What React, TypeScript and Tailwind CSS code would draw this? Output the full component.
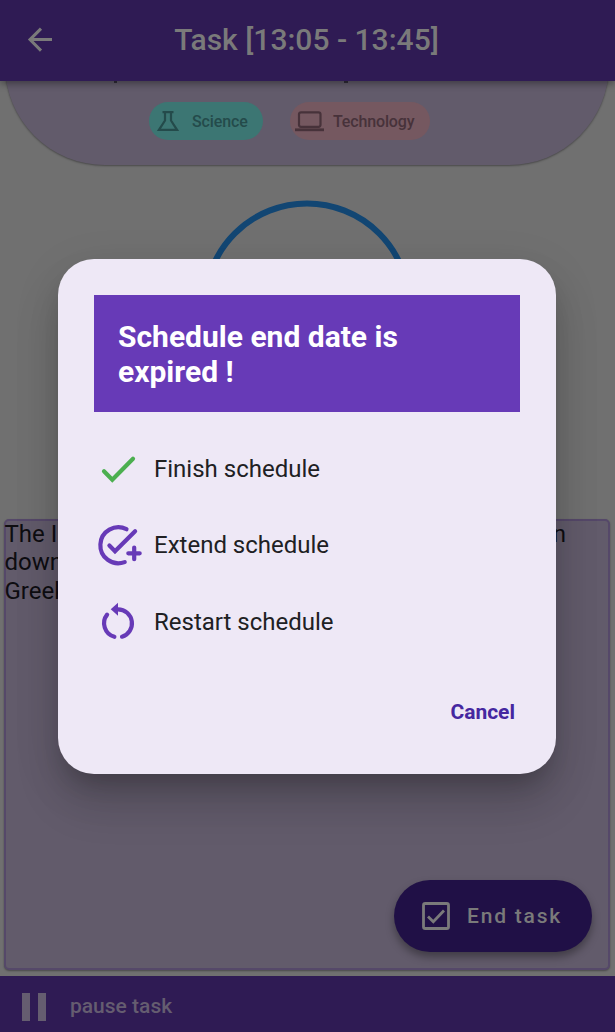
import React from "react";

function CheckIcon() {
  return (
    <svg className="h-12 w-12 shrink-0" viewBox="0 0 48 48" fill="none" stroke="#4caf50" strokeWidth="4.2" strokeLinecap="round" strokeLinejoin="miter">
      <path d="M10 26.3 18.3 34.7 39 13.8" />
    </svg>
  );
}

function ExtendIcon() {
  return (
    <svg className="h-12 w-12 shrink-0" viewBox="0 0 48 48" fill="none" stroke="#673ab7" strokeWidth="4.2" strokeLinecap="round">
      <path d="M32.5 8.2A18 18 0 1 0 30.7 41.1" />
      <path d="M15.4 24.6 21 30.2 41.1 10.2" strokeLinejoin="miter" />
      <path d="M34.3 32.3H45.7M40.2 26.6V38.2" />
    </svg>
  );
}

function RestartIcon() {
  return (
    <svg className="h-12 w-12 shrink-0" viewBox="0 0 48 48" fill="none" stroke="#673ab7" strokeWidth="4.2" strokeLinecap="round">
      <path d="M24 11.3A14 14 0 0 1 28 38.7" />
      <path d="M13.1 16.6A14 14 0 0 0 20.4 38.8" />
      <path d="M16.7 11.2 24 4.7V17.8Z" fill="#673ab7" stroke="none" />
    </svg>
  );
}

function Header() {
  return (
    <header className="relative z-10 flex h-[81px] items-center bg-[#2f1b54] px-6 pb-[2px] text-[#7a7a7a] shadow-[0_3px_7px_rgba(0,0,0,0.35)]">
      <svg className="h-8 w-8 shrink-0" viewBox="0 0 32 32" fill="none" stroke="currentColor" strokeWidth="3">
        <path d="M28 15.6H7M17 4.6 6 15.6 17 26.6" />
      </svg>
      <h1 className="flex-1 pr-[34px] text-center text-[30px] leading-[36px] font-medium">Task [13:05 - 13:45]</h1>
    </header>
  );
}

function Tags() {
  return (
    <section className="mx-[5px] -mt-10 h-[124px] w-[604px] rounded-b-[100px] bg-[#625b6b] pt-10 shadow-[0_1px_2px_rgba(0,0,0,0.35)]">
      <div className="flex h-[21px] items-start pl-[109px]">
        <span className="h-[1.5px] w-[3px] bg-[#302c38]" />
        <span className="ml-[227px] h-[1.5px] w-[4px] bg-[#302c38]" />
      </div>
      <div className="flex gap-[27px] pl-[144px] text-[16px] font-medium">
        <div className="flex h-[38px] w-[114px] items-center rounded-full bg-[#3c7673] pl-2 text-[#244b4b]">
          <svg className="mr-[13px] h-6 w-[22px]" viewBox="0 0 22 24" fill="none" stroke="currentColor" strokeWidth="2.2">
            <path d="M5.5 3.2H16.5M8 3V11.5L2 20.8H20L14 11.5V3" />
          </svg>
          <span className="pt-[2px] tracking-[-0.1px]">Science</span>
        </div>
        <div className="flex h-[38px] w-[140px] items-center rounded-full bg-[#755860] pl-[5px] text-[#47323a]">
          <svg className="mr-[9px] h-6 w-[29px]" viewBox="0 0 29 24" fill="none" stroke="currentColor" strokeWidth="2.2">
            <rect x="4" y="3.3" width="21.5" height="14.5" rx="2" />
            <path d="M0 20.8H29" strokeWidth="2.8" />
          </svg>
          <span className="pt-[2px] tracking-[-0.15px]">Technology</span>
        </div>
      </div>
    </section>
  );
}

function Notes() {
  return (
    <section className="mx-1 h-[451px] w-[606px] rounded-[5px] border-2 border-[#554869] bg-[#625b6b] text-[24px] leading-[28.3px] text-[#0e0d11] shadow-[0_1px_2px_rgba(0,0,0,0.35)]">
      <div className="-mt-px -ml-[1.5px] flex justify-between pr-[42px]">
        <span>The I</span>
        <span>n</span>
      </div>
      <div className="-ml-[1.5px]">down</div>
      <div className="-ml-[1.5px]">Greek</div>
    </section>
  );
}

function Option({ icon, label }: { icon: React.ReactNode; label: string }) {
  return (
    <button className="flex h-12 items-center gap-3 text-left text-[24px] leading-[30px] text-[#202023]">
      {icon}
      <span>{label}</span>
    </button>
  );
}

function ExpiredDialog() {
  return (
    <div className="absolute inset-0 z-30 flex items-start justify-center pt-[259px] pr-px">
      <div role="dialog" className="flex h-[515px] w-[498px] flex-col rounded-[36px] bg-[#eee8f6] px-9 pt-9 shadow-[0_16px_23px_-10px_rgba(0,0,0,0.2),0_30px_45px_0px_rgba(0,0,0,0.14),0_12px_48px_3px_rgba(0,0,0,0.08)]">
        <h2 className="h-[117px] bg-[#673ab7] px-6 pt-6 text-[30px] leading-[35px] font-bold text-white">
          Schedule end date is
          <br />
          expired !
        </h2>
        <div className="mt-[33px] flex flex-col">
          <Option icon={<CheckIcon />} label="Finish schedule" />
          <div className="h-7" />
          <Option icon={<ExtendIcon />} label="Extend schedule" />
          <div className="h-[29px]" />
          <Option icon={<RestartIcon />} label="Restart schedule" />
        </div>
        <button className="mt-[54px] mr-[5px] self-end text-[21px] leading-[24px] font-bold text-[#4527a0]">Cancel</button>
      </div>
    </div>
  );
}

export default function App() {
  return (
    <div className="relative flex h-[1032px] w-[615px] flex-col overflow-hidden bg-[#707070] font-['Roboto',sans-serif]">
      <Header />
      <Tags />
      <div className="flex h-[354px] justify-center pt-[34px] pr-px">
        <svg className="h-[214px] w-[214px]" viewBox="0 0 214 214" fill="none">
          <circle cx="107" cy="106.5" r="102" stroke="#124673" strokeWidth="6" />
        </svg>
      </div>
      <Notes />
      <footer className="mt-auto flex h-[56px] items-center bg-[#2f1b54] pt-[5px] pl-[22px] text-[21px] font-medium text-[#655d70]">
        <span className="flex gap-2">
          <span className="h-7 w-2 bg-[#655d70]" />
          <span className="h-7 w-2 bg-[#655d70]" />
        </span>
        <span className="ml-6 pt-px">pause task</span>
      </footer>
      <button className="absolute top-[880px] left-[394px] z-20 flex h-[72px] w-[198px] items-center rounded-full bg-[#201046] pl-7 text-[21px] font-medium tracking-[1.8px] text-[#7a7a7a] shadow-[0_5px_9px_rgba(0,0,0,0.35)]">
        <svg className="mr-[17px] h-7 w-7" viewBox="0 0 28 28" fill="none" stroke="currentColor" strokeWidth="2.8">
          <rect x="1.5" y="1.5" width="25" height="25" rx="1.8" />
          <path d="M6 14.5 11.3 19.7 22 8.5" />
        </svg>
        <span className="pt-[2px]">End task</span>
      </button>
      <ExpiredDialog />
    </div>
  );
}
